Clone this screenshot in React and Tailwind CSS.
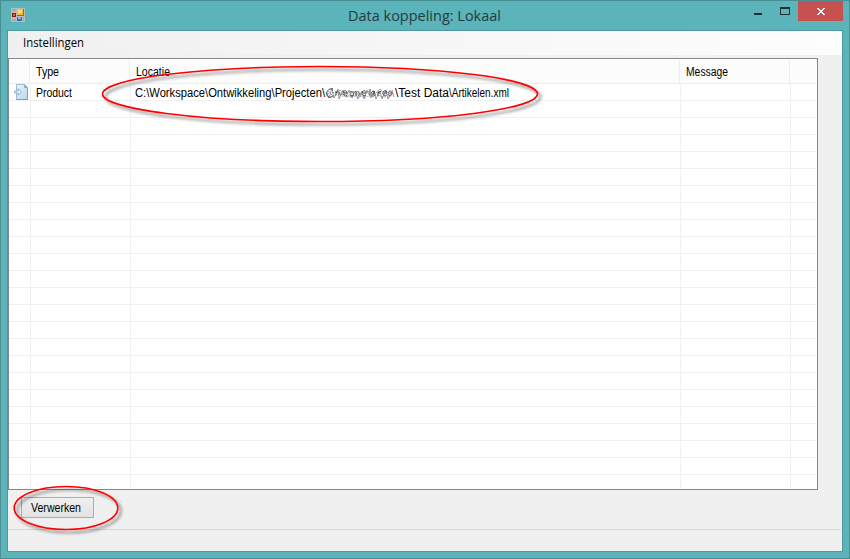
import React from 'react';

const ROWS = Array.from({ length: 24 }, (_, i) => i);
const LIST_FONT = "font-['Liberation_Sans',sans-serif] text-[12px] leading-[14px] text-black";

function FormIcon() {
  return (
    <svg className="block" width="14" height="14" viewBox="0 0 14 14" shapeRendering="crispEdges">
      <rect width="14" height="14" fill="#bdbcb8" />
      <path d="M1 1h2v2H1zM3 1h2v2H3zM1 11h2v2H1zM3 11h2v2H3zM12 9h1v4h-1z" fill="#a3aaa9" />
      <rect x="6" y="1" width="7" height="7" fill="#9c6c08" />
      <rect x="6" y="1" width="6" height="6" fill="#f3bd2c" />
      <rect x="7" y="2" width="4" height="3" fill="#ffe07a" />
      <rect x="1" y="5" width="4" height="4" fill="#9a1414" />
      <rect x="2" y="6" width="2" height="2" fill="#ea5a50" />
      <rect x="6" y="9" width="5" height="4" fill="#3468cc" />
      <rect x="7" y="9" width="3" height="2" fill="#8db6f5" />
    </svg>
  );
}

function ImportIcon() {
  return (
    <svg className="block" width="14" height="16" viewBox="0 0 14 16">
      <defs>
        <linearGradient id="sheet" x1="0" y1="0" x2="1" y2="1">
          <stop offset="0" stopColor="#eef7fc" />
          <stop offset="1" stopColor="#b4d6ea" />
        </linearGradient>
      </defs>
      <path d="M2.5 .5h8l3 3v12h-11z" fill="url(#sheet)" stroke="#a3bccd" />
      <path d="M13.5 3.5v12h-11" stroke="#7f9fb8" fill="none" />
      <path d="M10.5 .5v3h3z" fill="#86a5bd" stroke="#86a5bd" strokeWidth=".6" />
      <path d="M.5 7h3.7V4.7L7.6 8l-3.4 3.3V9H.5z" fill="#e6f4fb" stroke="#7fa6c0" strokeWidth=".8" />
    </svg>
  );
}

function TitleBar() {
  return (
    <div className="flex h-[29px] items-start">
      <div className="w-[160px] pl-[10px] pt-[7px]"><FormIcon /></div>
      <div className="flex-1 pl-[187px] pt-[5px]">
        <svg className="block overflow-visible" width="153" height="20">
          <text x="0" y="15" fontFamily="'Open Sans', sans-serif" fontSize="14.5" textLength="153" lengthAdjust="spacingAndGlyphs" fill="#263b3e">Data koppeling: Lokaal</text>
        </svg>
      </div>
      <svg className="block" width="95" height="20" viewBox="749 1 95 20" shapeRendering="crispEdges">
        <path d="M754 13h8v2h-8z" fill="#262f30" />
        <path d="M780 7h10v8h-10zM781 9v5h8V9z" fillRule="evenodd" fill="#262f30" />
        <rect x="798" y="1" width="45" height="20" fill="#c75050" />
        <path d="M817 8h2v1h1v1h2V9h1V8h2v1h-1v1h-1v1h-1v1h1v1h1v1h1v1h-2v-1h-1v-1h-2v1h-1v1h-2v-1h1v-1h1v-1h1v-1h-1v-1h-1V9h-1z" fill="#fff" />
      </svg>
      <div className="w-[5px]" />
    </div>
  );
}

function Label({ children, width, className = '' }) {
  return (
    <svg className={`block shrink-0 overflow-visible ${className}`} width={width} height="14">
      <text x="0" y="11" fontFamily="'Liberation Sans', sans-serif" fontSize="12" textLength={width} lengthAdjust="spacingAndGlyphs" fill="#000">{children}</text>
    </svg>
  );
}

function Scribble() {
  return (
    <svg className="block shrink-0" width="70" height="14" viewBox="0 0 70 14" fill="none">
      <path d="M1 6l3 6 3-10 2 10 4-9 1 10 4-9 3 7 3-7 3 8 3-7 3 8 4-8 2 8 3-8 4 7 3-7 2 8 4-8 2 8 4-9 2 9 4-8 2 6" stroke="#88888e" strokeWidth=".9" />
      <path d="M8 3C3 2 1 6 2 9s4 3 6 1M11 9V5m0 2c1-3 4-2 4 2M18 7h4c0-3-4-3-4 0s3 3 4 2M25 6c3-1 4 0 3 4-2 0-4-1-2-2M31 5v5m0-3c2-3 4-1 3 3M37 7h4c0-3-4-3-4 0s3 3 4 2M45 3v6M49 5c-4 0-4 6 0 5V5v5M53 5v5m0-3l3-2M58 7h4c0-3-4-3-4 0s3 3 4 2M65 5c-2 0-2 5 0 5s3-5 0-5" stroke="#41414d" />
      <path d="M3 5l6 6 6-7 7 7 7-6 6 5 7-6 6 6 7-7 6 7 7-6" stroke="#b5aa9e" />
      <path d="M2 8l9-2 7 3 8-3 8 3 9-3 8 3 8-3 8 2M5 11l7-2 10 2 9-1 9 1 9-2 12 2" stroke="#828b9e" strokeWidth=".8" strokeDasharray="2 1 1 1" />
    </svg>
  );
}

function ListView() {
  return (
    <div className={`flex h-[432px] w-[810px] flex-col border border-[#828790] bg-white pb-px pr-px pt-px ${LIST_FONT}`}>
      <div className="flex h-[24px] shrink-0 border-b border-[#e5eefa] bg-[#fcfcfc]">
        <div className="w-[21px] border-r border-[#e5eefa]" />
        <div className="w-[100px] border-r border-[#e5eefa] pl-[6px] pt-[5px]"><Label width={23}>Type</Label></div>
        <div className="w-[550px] border-r border-[#e5eefa] pl-[6px] pt-[5px]"><Label width={34}>Locatie</Label></div>
        <div className="w-[110px] border-r border-[#e5eefa] pl-[6px] pt-[5px]"><Label width={42}>Message</Label></div>
      </div>
      <div className="flex min-h-0 flex-1 flex-col overflow-hidden">
        {ROWS.map((i) => (
          <div key={i} className="flex h-[17px] shrink-0 border-b border-[#f0f0f0]">
            <div className="w-[22px] border-r border-[#f0f0f0] pl-[5px]">{i === 0 && <ImportIcon />}</div>
            <div className="w-[100px] border-r border-[#f0f0f0] pl-[5px] pt-[2px]">{i === 0 && <Label width={36}>Product</Label>}</div>
            <div className="flex w-[550px] border-r border-[#f0f0f0] pl-[4px] pt-[2px]">
              {i === 0 && (
                <>
                  <Label width={190}>{'C:\\Workspace\\Ontwikkeling\\Projecten\\'}</Label>
                  <Scribble />
                  <Label width={54}>{'\\Test Data'}</Label>
                  <Label width={60}>{'\\Artikelen.xml'}</Label>
                </>
              )}
            </div>
            <div className="w-[110px] border-r border-[#f0f0f0]" />
          </div>
        ))}
      </div>
    </div>
  );
}

function Annotations() {
  return (
    <svg className="pointer-events-none absolute -left-px -top-px" width="850" height="559" fill="none">
      <defs>
        <filter id="shade" x="-10%" y="-25%" width="120%" height="160%">
          <feDropShadow dx="3" dy="3" stdDeviation="1.7" floodColor="#000" floodOpacity=".5" />
        </filter>
      </defs>
      <ellipse cx="320" cy="94" rx="217.5" ry="27.5" stroke="#f00" strokeWidth="1.6" filter="url(#shade)" />
      <ellipse cx="66" cy="508" rx="51.8" ry="21.5" stroke="#f00" strokeWidth="1.6" filter="url(#shade)" />
    </svg>
  );
}

export default function App() {
  return (
    <div className="relative h-[559px] w-[850px] overflow-hidden border border-[#488e93] bg-[#5ab4ba]">
      <TitleBar />
      <div className="ml-[6px] flex h-[522px] w-[836px] flex-col border border-[#4c989e] bg-[#f0f0f0]">
        <div className="h-[24px] bg-linear-to-r from-[#f0f0f0] to-[#fdfdfd] pl-[15px] pt-[4px]">
          <svg className="block overflow-visible" width="61" height="16">
            <text x="0" y="12" fontFamily="'Open Sans', sans-serif" fontSize="12" textLength="61" lengthAdjust="spacingAndGlyphs" fill="#000">Instellingen</text>
          </svg>
        </div>
        <div className="h-[3px]" />
        <ListView />
        <div className="h-[39px] pl-[13px] pt-[7px]">
          <button className="flex h-[21px] w-[73px] items-start border border-[#adadad] bg-linear-to-b from-[#efefef] to-[#e3e3e3] pl-[9px] pt-[3px]">
            <Label width={50}>Verwerken</Label>
          </button>
        </div>
        <div className="mr-[1px] flex-1 border-t border-[#d7d7d7]" />
      </div>
      <Annotations />
    </div>
  );
}
